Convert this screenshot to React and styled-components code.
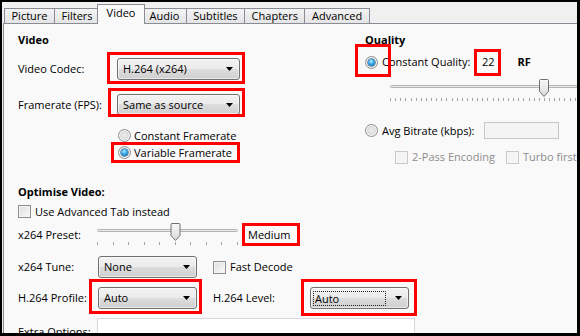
import React from 'react';
import styled, { createGlobalStyle } from 'styled-components';

const Global = createGlobalStyle`
  html, body { margin: 0; padding: 0; background: #000; }
  body { font-family: "Open Sans", "Noto Sans", sans-serif; font-size: 11px; color: #000; }
  * { box-sizing: border-box; }
`;

const Frame = styled.div`
  width: 580px;
  height: 336px;
  padding: 2px 3px 3px 2px;
  background: #000;
  overflow: hidden;
`;

const Window = styled.div`
  width: 100%;
  height: 100%;
  background: #f0f0f0;
  display: flex;
  flex-direction: column;
  overflow: hidden;
  padding-left: 1px;
`;

const TabStrip = styled.div`
  height: 21px;
  flex: none;
  display: flex;
  align-items: flex-end;
  padding-left: 1px;
`;

const Tab = styled.div`
  position: relative;
  height: ${p => (p.$active ? 20 : 15)}px;
  margin: 0 ${p => (p.$active ? -2 : 0)}px ${p => (p.$active ? -1 : 0)}px ${p => (p.$active ? -3 : -1)}px;
  padding: ${p => (p.$active ? '0 8.5px 3px' : '0 6.5px')};
  border: 1px solid #898c95;
  border-bottom: none;
  background: ${p => (p.$active ? '#f9f9f9' : 'linear-gradient(#f3f3f3, #e4e4e4)')};
  z-index: ${p => (p.$active ? 2 : 1)};
  display: flex;
  align-items: center;
  line-height: 14px;
  white-space: nowrap;
  &:first-child { margin-left: 0; }
`;

const Panel = styled.div`
  flex: 1;
  background: #f9f9f9;
  border-top: 1px solid #898c95;
  border-left: 1px solid #898c95;
  padding: 8px 0 0 14px;
  overflow: hidden;
`;

const TopSection = styled.div`
  display: flex;
  height: 132px;
`;

const Column = styled.div`
  width: ${p => p.$w ? `${p.$w}px` : 'auto'};
  flex: none;
  display: flex;
  flex-direction: column;
  align-items: flex-start;
`;

const SectionTitle = styled.div`
  font-weight: 700;
  line-height: 16px;
  height: 16px;
  margin-top: ${p => p.$mt || 0}px;
`;

const Row = styled.div`
  display: flex;
  align-items: ${p => p.$align || 'center'};
  height: ${p => (p.$h ? `${p.$h}px` : 'auto')};
  margin-top: ${p => p.$mt || 0}px;
  margin-left: ${p => p.$ml || 0}px;
  width: ${p => (p.$w ? `${p.$w}px` : 'auto')};
  flex: none;
`;

const Label = styled.span`
  width: ${p => (p.$w ? `${p.$w}px` : 'auto')};
  margin-left: ${p => p.$ml || 0}px;
  padding-top: ${p => p.$pt || 0}px;
  line-height: 16px;
  white-space: nowrap;
  flex: none;
  font-weight: ${p => (p.$bold ? 700 : 400)};
  color: ${p => (p.$disabled ? '#8d8d8d' : '#000')};
`;

const Mark = styled.span`
  position: relative;
  display: inline-flex;
  align-items: center;
  flex: none;
  margin-left: ${p => p.$ml || 0}px;
  &::after {
    content: '';
    position: absolute;
    top: -${p => p.$t}px;
    right: -${p => p.$r}px;
    bottom: -${p => p.$b}px;
    left: -${p => p.$l}px;
    border: 3px solid #ff0000;
    pointer-events: none;
    z-index: 3;
  }
`;

const Combo = styled.div`
  width: ${p => p.$w}px;
  height: ${p => p.$h || 22}px;
  border: 1px solid #707070;
  border-radius: 3px;
  background: linear-gradient(#f2f2f2 0%, #ebebeb 50%, #dddddd 50%, #cfcfcf 100%);
  box-shadow: inset 0 0 0 1px rgba(255, 255, 255, 0.55);
  display: flex;
  align-items: center;
  justify-content: space-between;
  padding: 0 6px 0 4px;
  line-height: 16px;
  white-space: nowrap;
  flex: none;
`;

const ComboText = styled.span`
  padding: 0 1px;
`;

const FocusText = styled.span`
  flex: 1;
  margin: 0 9px 0 -2px;
  height: 15px;
  line-height: 13px;
  padding: 0 1px;
  border: 1px dotted #222;
`;

const Arrow = () => (
  <svg width="7" height="4" viewBox="0 0 7 4" style={{ flex: 'none' }}>
    <path d="M0 0 H7 L3.5 4 Z" fill="#000" />
  </svg>
);

const Radio = styled.span`
  width: 13px;
  height: 13px;
  border-radius: 50%;
  border: 1px solid #8e8f8f;
  background: radial-gradient(circle at 50% 50%, #ececec 0%, #dcdcdc 55%, #f6f6f6 100%);
  box-shadow: inset 0 0 0 1px #f4f4f4;
  position: relative;
  flex: none;
  &::after {
    content: '';
    display: ${p => (p.$checked ? 'block' : 'none')};
    position: absolute;
    left: 2px;
    top: 2px;
    width: 7px;
    height: 7px;
    border-radius: 50%;
    background: radial-gradient(circle at 45% 35%, #b8ecff 0%, #34a7e6 45%, #0e5a92 100%);
    box-shadow: 0 0 0 0.5px #1b4f7a;
  }
`;

const Check = styled.span`
  width: 13px;
  height: 13px;
  border: 1px solid ${p => (p.$disabled ? '#c9c9c9' : '#8e8f8f')};
  background: ${p => (p.$disabled ? '#f4f4f4' : 'linear-gradient(135deg, #dcdcdc, #fbfbfb)')};
  box-shadow: inset 0 0 0 1px ${p => (p.$disabled ? '#f7f7f7' : '#f4f4f4')};
  flex: none;
`;

const TextBox = styled.div`
  width: ${p => p.$w}px;
  height: ${p => p.$h}px;
  border: 1px solid ${p => p.$border || '#c7c7c7'};
  background: ${p => p.$bg || '#f4f4f4'};
  flex: none;
`;

const SliderSvg = styled.svg`
  display: block;
  flex: none;
  overflow: visible;
`;

function Slider({ id, width, trackWidth, ticks, step, start = 0, thumb }) {
  const tickEls = [];
  for (let i = 0; i < ticks; i++) {
    const x = Math.round(start + i * step);
    tickEls.push(<rect key={i} x={x} y={19} width={1} height={3} fill="#a4a4a4" />);
  }
  const tw = trackWidth || width;
  return (
    <SliderSvg width={width} height={23} viewBox={`0 0 ${width} 23`}>
      <defs>
        <linearGradient id={id} x1="0" y1="0" x2="0" y2="1">
          <stop offset="0" stopColor="#f8f8f8" />
          <stop offset="1" stopColor="#d9d9d9" />
        </linearGradient>
      </defs>
      <rect x={0.5} y={6.5} width={tw - 1} height={2} rx={1} fill="#e9ebeb" stroke="#b4b4b4" />
      {tickEls}
      <path
        d={`M${thumb - 4.5} 1.5 Q${thumb - 4.5} 0.5 ${thumb - 3.5} 0.5 H${thumb + 3.5} Q${thumb + 4.5} 0.5 ${thumb + 4.5} 1.5 V12.5 L${thumb} 17.5 L${thumb - 4.5} 12.5 Z`}
        fill={`url(#${id})`}
        stroke="#707070"
      />
    </SliderSvg>
  );
}

const tabs = ['Picture', 'Filters', 'Video', 'Audio', 'Subtitles', 'Chapters', 'Advanced'];

export default function App() {
  return (
    <>
      <Global />
      <Frame>
        <Window>
          <TabStrip>
            {tabs.map(t => (
              <Tab key={t} $active={t === 'Video'}>{t}</Tab>
            ))}
          </TabStrip>
          <Panel>
            <TopSection>
              <Column $w={347}>
                <SectionTitle>Video</SectionTitle>
                <Row $mt={10}>
                  <Label $w={99}>Video Codec:</Label>
                  <Mark $t={6} $r={5} $b={4} $l={10}>
                    <Combo $w={123}>
                      <ComboText>H.264 (x264)</ComboText>
                      <Arrow />
                    </Combo>
                  </Mark>
                </Row>
                <Row $mt={14}>
                  <Label $w={99}>Framerate (FPS):</Label>
                  <Mark $t={6} $r={5} $b={2} $l={9}>
                    <Combo $w={123} $h={21}>
                      <ComboText>Same as source</ComboText>
                      <Arrow />
                    </Combo>
                  </Mark>
                </Row>
                <Row $mt={12} $ml={100} $h={17}>
                  <Radio />
                  <Label $ml={3}>Constant Framerate</Label>
                </Row>
                <Mark $t={2} $r={10} $b={2} $l={7} $ml={100}>
                  <Row $h={17} $w={112}>
                    <Radio $checked />
                    <Label $ml={3}>Variable Framerate</Label>
                  </Row>
                </Mark>
              </Column>
              <Column>
                <SectionTitle>Quality</SectionTitle>
                <Row $mt={6} $h={16}>
                  <Mark $t={12} $r={13} $b={8} $l={10}>
                    <Radio $checked />
                  </Mark>
                  <Label $ml={4} $w={100}>Constant Quality:</Label>
                  <Mark $t={5} $r={6} $b={6} $l={8}>
                    <Label>22</Label>
                  </Mark>
                  <Label $ml={23} $bold>RF</Label>
                </Row>
                <Row $mt={9} $ml={25}>
                  <Slider id="rf" width={240} trackWidth={440} ticks={52} step={5.13} start={0} thumb={154} />
                </Row>
                <Row $mt={20} $h={17}>
                  <Radio />
                  <Label $ml={4} $w={102}>Avg Bitrate (kbps):</Label>
                  <TextBox $w={75} $h={17} />
                </Row>
                <Row $mt={11} $h={14} $ml={30}>
                  <Check $disabled />
                  <Label $ml={4} $w={94} $disabled>2-Pass Encoding</Label>
                  <Check $disabled />
                  <Label $ml={4} $disabled>Turbo first pass</Label>
                </Row>
              </Column>
            </TopSection>

            <SectionTitle $mt={20}>Optimise Video:</SectionTitle>
            <Row $mt={4} $h={15}>
              <Check />
              <Label $ml={4}>Use Advanced Tab instead</Label>
            </Row>
            <Row $mt={4} $h={23}>
              <Label $w={79}>x264 Preset:</Label>
              <Slider id="preset" width={141} ticks={10} step={15.55} start={0} thumb={78.5} />
              <Mark $t={4} $r={9} $b={3} $l={6} $ml={10}>
                <Label>Medium</Label>
              </Mark>
            </Row>
            <Row $mt={10}>
              <Label $w={80}>x264 Tune:</Label>
              <Combo $w={99}>
                <ComboText>None</ComboText>
                <Arrow />
              </Combo>
              <Row $ml={16}>
                <Check />
                <Label $ml={4}>Fast Decode</Label>
              </Row>
            </Row>
            <Row $mt={9}>
              <Label $w={80}>H.264 Profile:</Label>
              <Mark $t={8} $r={5} $b={5} $l={9}>
                <Combo $w={99}>
                  <ComboText>Auto</ComboText>
                  <Arrow />
                </Combo>
              </Mark>
              <Label $w={97} $ml={16}>H.264 Level:</Label>
              <Mark $t={8} $r={8} $b={7} $l={9}>
                <Combo $w={99}>
                  <FocusText>Auto</FocusText>
                  <Arrow />
                </Combo>
              </Mark>
            </Row>
            <Row $mt={9} $align="flex-start">
              <Label $w={79} $pt={6}>Extra Options:</Label>
              <TextBox $w={318} $h={60} $bg="#fff" $border="#d5d8de" />
            </Row>
          </Panel>
        </Window>
      </Frame>
    </>
  );
}
